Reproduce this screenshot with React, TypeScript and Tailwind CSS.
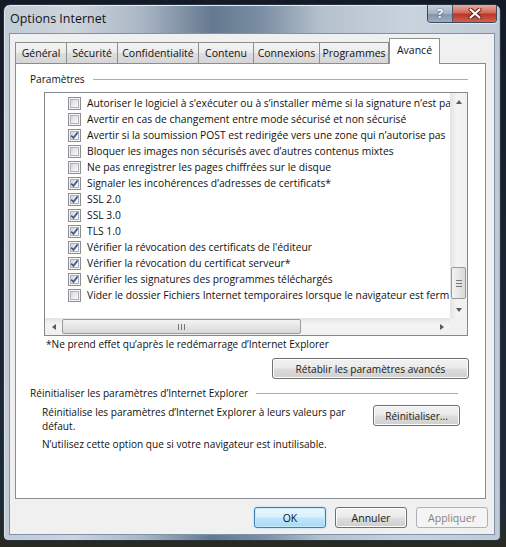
const rows: { label: string; checked: boolean }[] = [
  { label: "Autoriser le logiciel à s’exécuter ou à s’installer même si la signature n’est pa", checked: false },
  { label: "Avertir en cas de changement entre mode sécurisé et non sécurisé", checked: false },
  { label: "Avertir si la soumission POST est redirigée vers une zone qui n’autorise pas", checked: true },
  { label: "Bloquer les images non sécurisés avec d’autres contenus mixtes", checked: false },
  { label: "Ne pas enregistrer les pages chiffrées sur le disque", checked: false },
  { label: "Signaler les incohérences d’adresses de certificats*", checked: true },
  { label: "SSL 2.0", checked: true },
  { label: "SSL 3.0", checked: true },
  { label: "TLS 1.0", checked: true },
  { label: "Vérifier la révocation des certificats de l'éditeur", checked: true },
  { label: "Vérifier la révocation du certificat serveur*", checked: true },
  { label: "Vérifier les signatures des programmes téléchargés", checked: true },
  { label: "Vider le dossier Fichiers Internet temporaires lorsque le navigateur est ferm", checked: false },
];

const tabs = [
  { label: "Général", w: "w-[52px]" },
  { label: "Sécurité", w: "w-[52px]" },
  { label: "Confidentialité", w: "w-[82px]" },
  { label: "Contenu", w: "w-[56px]" },
  { label: "Connexions", w: "w-[67px]" },
  { label: "Programmes", w: "w-[70px]" },
];

const btn =
  "flex items-center justify-center rounded-[3px] border border-[#707070] bg-[linear-gradient(to_bottom,#f2f2f2_0%,#ebebeb_48%,#dddddd_52%,#cfcfcf_100%)] shadow-[inset_0_0_0_1px_#fcfcfc] text-[#1a1a1a]";

function Checkbox({ checked }: { checked: boolean }) {
  return (
    <div className="flex h-[13px] w-[13px] shrink-0 items-center justify-center border border-[#8e8f8f] bg-[#f4f4f4]">
      <div className="flex h-[9px] w-[9px] items-center justify-center border border-[#aeb3b9] bg-linear-to-br from-[#d3d6da] to-[#fbfbfb]">
        {checked && (
          <svg width="9" height="9" viewBox="0 0 9 9" className="overflow-visible">
            <path d="M1.2 4.6 L3.4 6.9 L7.8 1.4" fill="none" stroke="#46599a" strokeWidth="1.7" />
          </svg>
        )}
      </div>
    </div>
  );
}

function Arrow({ dir }: { dir: "up" | "down" | "left" | "right" }) {
  const pts = {
    up: "1,5 4,1 7,5",
    down: "1,1 4,5 7,1",
    left: "5,1 1,4 5,7",
    right: "1,1 5,4 1,7",
  }[dir];
  const vertical = dir === "up" || dir === "down";
  return (
    <svg width={vertical ? 8 : 6} height={vertical ? 6 : 8} viewBox={vertical ? "0 0 8 6" : "0 0 6 8"}>
      <polygon points={pts} fill="#5a5a5a" />
    </svg>
  );
}

function GroupTitle({ label, className }: { label: string; className?: string }) {
  return (
    <div className={"flex h-4 items-center " + (className ?? "")}>
      <span>{label}</span>
      <div className="ml-[8px] mt-[1px] h-px flex-1 bg-[#a8abb0]" />
    </div>
  );
}

export default function App() {
  return (
    <div className="h-[547px] w-[506px] overflow-hidden bg-[linear-gradient(to_bottom,#141b27_0%,#1f2a39_92%,#2a2a22_100%)] pl-[3px] pt-[4px] font-['Open_Sans','Noto_Sans',sans-serif] text-[10.1px] leading-4 text-[#111]">
      <div className="relative flex h-[537px] w-[498px] flex-col rounded-t-[7px] rounded-b-[5px] border border-[#27323f] bg-[linear-gradient(to_right,#c2ccd6_0%,#ccd4dc_14%,#a9b6c4_28%,#64788f_42%,#7b8ea3_52%,#b5c1cd_64%,#c9d3dd_82%,#bfcad6_100%)] shadow-[inset_0_1px_0_#e6ecf2,inset_1px_0_0_#dce4ec,inset_-1px_0_0_#9fb6cc]">
        {/* title */}
        <div className="flex h-[28px] shrink-0 items-center pl-[6px] text-[12.5px] text-[#151515]">
          Options Internet
        </div>

        <div className="absolute right-[3px] top-0 flex h-[18px] overflow-hidden rounded-b-[4px] border border-t-0 border-[#3e4a59] shadow-[0_1px_0_#dfe6ee]">
          <div className="flex w-[25px] items-center justify-center border-r border-[#4d5a6b] bg-[linear-gradient(to_bottom,#c6d2de_0%,#a3b3c4_50%,#7f92a8_51%,#9cb0c4_100%)] text-[12px] font-bold leading-none text-white [text-shadow:0_0_2px_#2b3745]">
            ?
          </div>
          <div className="flex w-[43px] items-center justify-center bg-[linear-gradient(to_bottom,#e9a99d_0%,#d2665a_48%,#bd3322_52%,#d1604a_100%)]">
            <svg width="14" height="11" viewBox="0 0 14 11">
              <path d="M2.5 1.5 L11.5 9.5 M11.5 1.5 L2.5 9.5" stroke="#5a1d16" strokeWidth="4" strokeLinecap="round" />
              <path d="M2.5 1.5 L11.5 9.5 M11.5 1.5 L2.5 9.5" stroke="#ffffff" strokeWidth="2.2" strokeLinecap="round" />
            </svg>
          </div>
        </div>

        {/* client */}
        <div className="mx-[5px] flex h-[502px] flex-col border border-[#7e92a8] bg-[#f0f0f0] pl-[5px] pt-[4px]">
          {/* tabs */}
          <div className="flex h-[25px] items-end text-[10.5px]">
            {tabs.map((t) => (
              <div
                key={t.label}
                className={
                  t.w +
                  " -mr-px flex h-[21px] items-center justify-center border border-b-0 border-[#8e8f8f] bg-[linear-gradient(to_bottom,#f3f3f3_0%,#ebebeb_50%,#dedede_51%,#d6d6d6_100%)] pb-[1px]"
                }
              >
                {t.label}
              </div>
            ))}
            <div className="relative z-10 -mb-px ml-px flex h-[26px] w-[51px] items-start justify-center border border-b-0 border-[#8e8f8f] bg-white pt-[3px]">
              Avancé
            </div>
          </div>

          {/* panel */}
          <div className="flex h-[436px] w-[471px] flex-col border border-[#898c95] bg-white">
            <GroupTitle label="Paramètres" className="mt-[7px] pl-[14px] pr-[17px]" />

            {/* list box */}
            <div className="ml-[28px] mt-[5px] flex h-[244px] w-[424px] flex-col border border-[#828790] text-[10.3px]">
              <div className="flex h-[225px]">
                <div className="flex-1 overflow-hidden pt-[2px]">
                  {rows.map((r) => (
                    <div key={r.label} className="flex h-4 items-center whitespace-nowrap pl-[23px]">
                      <Checkbox checked={r.checked} />
                      <span className="ml-[6px]">{r.label}</span>
                    </div>
                  ))}
                </div>
                <div className="flex w-[17px] flex-col bg-[linear-gradient(to_right,#e3e3e3,#f4f4f4_40%,#f0f0f0)]">
                  <div className="flex h-[17px] items-center justify-center">
                    <Arrow dir="up" />
                  </div>
                  <div className="flex-1" />
                  <div className="mx-[1px] flex h-[32px] flex-col items-center justify-center gap-[2px] rounded-[2px] border border-[#9a9a9a] bg-[linear-gradient(to_right,#f3f3f3,#e6e6e6_50%,#d9d9d9)]">
                    <div className="h-px w-[6px] bg-[#777]" />
                    <div className="h-px w-[6px] bg-[#777]" />
                    <div className="h-px w-[6px] bg-[#777]" />
                  </div>
                  <div className="mt-[2px] flex h-[17px] items-center justify-center">
                    <Arrow dir="down" />
                  </div>
                </div>
              </div>
              <div className="flex h-[17px]">
                <div className="flex flex-1 items-center bg-[linear-gradient(to_bottom,#e3e3e3,#f4f4f4_40%,#f0f0f0)]">
                  <div className="flex w-[17px] items-center justify-center">
                    <Arrow dir="left" />
                  </div>
                  <div className="flex h-[15px] w-[239px] items-center justify-center gap-[2px] rounded-[2px] border border-[#9a9a9a] bg-[linear-gradient(to_bottom,#f3f3f3,#e6e6e6_50%,#d9d9d9)]">
                    <div className="h-[6px] w-px bg-[#777]" />
                    <div className="h-[6px] w-px bg-[#777]" />
                    <div className="h-[6px] w-px bg-[#777]" />
                  </div>
                  <div className="flex-1" />
                  <div className="flex w-[17px] items-center justify-center">
                    <Arrow dir="right" />
                  </div>
                </div>
                <div className="w-[17px] bg-[#f0f0f0]" />
              </div>
            </div>

            <div className="ml-[30px] h-4">*Ne prend effet qu’après le redémarrage d’Internet Explorer</div>

            <div className="mt-[6px] flex justify-end pr-[16px]">
              <div className={btn + " h-[21px] w-[197px]"}>Rétablir les paramètres avancés</div>
            </div>

            <GroupTitle label="Réinitialiser les paramètres d’Internet Explorer" className="mt-[6px] pl-[14px] pr-[27px]" />

            <div className="mt-[4px] flex items-start pl-[26px] pr-[25px] leading-[14px]">
              <div className="flex-1">
                Réinitialise les paramètres d’Internet Explorer à leurs valeurs par
                <br />
                défaut.
              </div>
              <div className={btn + " h-[21px] w-[87px]"}>Réinitialiser...</div>
            </div>

            <div className="mt-[4px] pl-[26px] leading-[14px]">
              N’utilisez cette option que si votre navigateur est inutilisable.
            </div>
          </div>

          {/* dialog buttons */}
          <div className="mt-[8px] flex justify-end gap-[9px] pr-[6px] text-[10.5px]">
            <div className="flex h-[21px] w-[72px] items-center justify-center rounded-[3px] border border-[#3c7fb1] bg-[linear-gradient(to_bottom,#eaf6fd_0%,#d9f0fc_48%,#bee6fd_52%,#a7d9f5_100%)] shadow-[inset_0_0_0_1px_#c6eafc,0_0_2px_#8fd0f5]">
              OK
            </div>
            <div className={btn + " h-[21px] w-[72px]"}>Annuler</div>
            <div className="flex h-[21px] w-[72px] items-center justify-center rounded-[3px] border border-[#adb2b5] bg-[#f4f4f4] text-[#838383]">
              Appliquer
            </div>
          </div>
        </div>
      </div>
    </div>
  );
}
